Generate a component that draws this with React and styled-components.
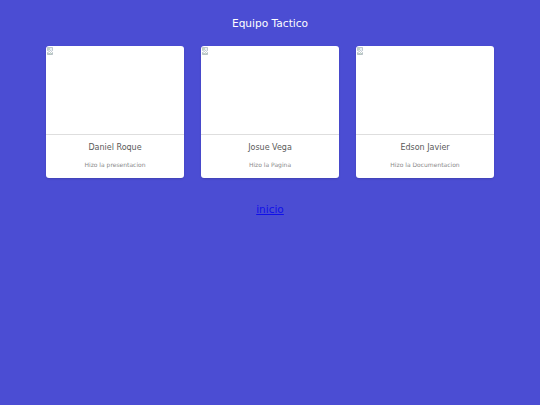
import styled, { createGlobalStyle } from "styled-components";

const GlobalStyle = createGlobalStyle`
  html, body {
    margin: 0;
    padding: 0;
    background: #4b4dd3;
    font-family: "DejaVu Sans", "Open Sans", sans-serif;
  }
`;

const equipo = [
  { nombre: "Daniel Roque", tarea: "Hizo la presentacion" },
  { nombre: "Josue Vega", tarea: "Hizo la Pagina" },
  { nombre: "Edson Javier", tarea: "Hizo la Documentacion" },
];

export default function App() {
  return (
    <>
      <GlobalStyle />
      <Page>
        <Title>Equipo Tactico</Title>
        <Cards>
          {equipo.map((m) => (
            <Card key={m.nombre}>
              <Photo>
                <BrokenImg />
              </Photo>
              <Info>
                <Name>{m.nombre}</Name>
                <Task>{m.tarea}</Task>
              </Info>
            </Card>
          ))}
        </Cards>
        <Inicio href="#">inicio</Inicio>
      </Page>
    </>
  );
}

function BrokenImg() {
  return (
    <Icon width="7" height="8" viewBox="0 0 7 8">
      <path d="M0.5 0.5h5v3l-1 1-1-1-1 1-2-1z" fill="#e8eef3" stroke="#9aa6b2" strokeWidth="0.6" />
      <path d="M0.5 5.5l2 1 1-1 1 1 1-1v2h-5z" fill="#cfe3cf" stroke="#9aa6b2" strokeWidth="0.6" />
      <circle cx="2" cy="2" r="0.7" fill="#7fae6f" />
    </Icon>
  );
}

const Page = styled.div`
  width: 540px;
  height: 405px;
  display: flex;
  flex-direction: column;
  align-items: center;
  box-sizing: border-box;
  padding-top: 16px;
`;

const Title = styled.h1`
  margin: 0;
  font-size: 10.6px;
  font-weight: 500;
  color: #ffffff;
  line-height: 14px;
`;

const Cards = styled.div`
  display: grid;
  grid-template-columns: repeat(3, 138px);
  column-gap: 17px;
  margin-top: 16px;
`;

const Card = styled.div`
  background: #ffffff;
  border-radius: 3px;
  overflow: hidden;
  height: 132px;
  display: flex;
  flex-direction: column;
  box-shadow: 0 1px 2px rgba(0, 0, 0, 0.15);
`;

const Photo = styled.div`
  height: 89px;
  border-bottom: 1px solid #dedede;
  padding: 1px;
  box-sizing: border-box;
`;

const Icon = styled.svg`
  display: block;
`;

const Info = styled.div`
  display: flex;
  flex-direction: column;
  align-items: center;
  padding-top: 7px;
`;

const Name = styled.div`
  font-size: 8px;
  color: #5a5a5a;
  line-height: 12px;
`;

const Task = styled.div`
  font-size: 6px;
  color: #8a8a8a;
  margin-top: 6px;
  line-height: 9px;
`;

const Inicio = styled.a`
  margin-top: 25px;
  font-size: 10.5px;
  font-weight: normal;
  color: #1010e8;
  text-decoration: underline;
`;
